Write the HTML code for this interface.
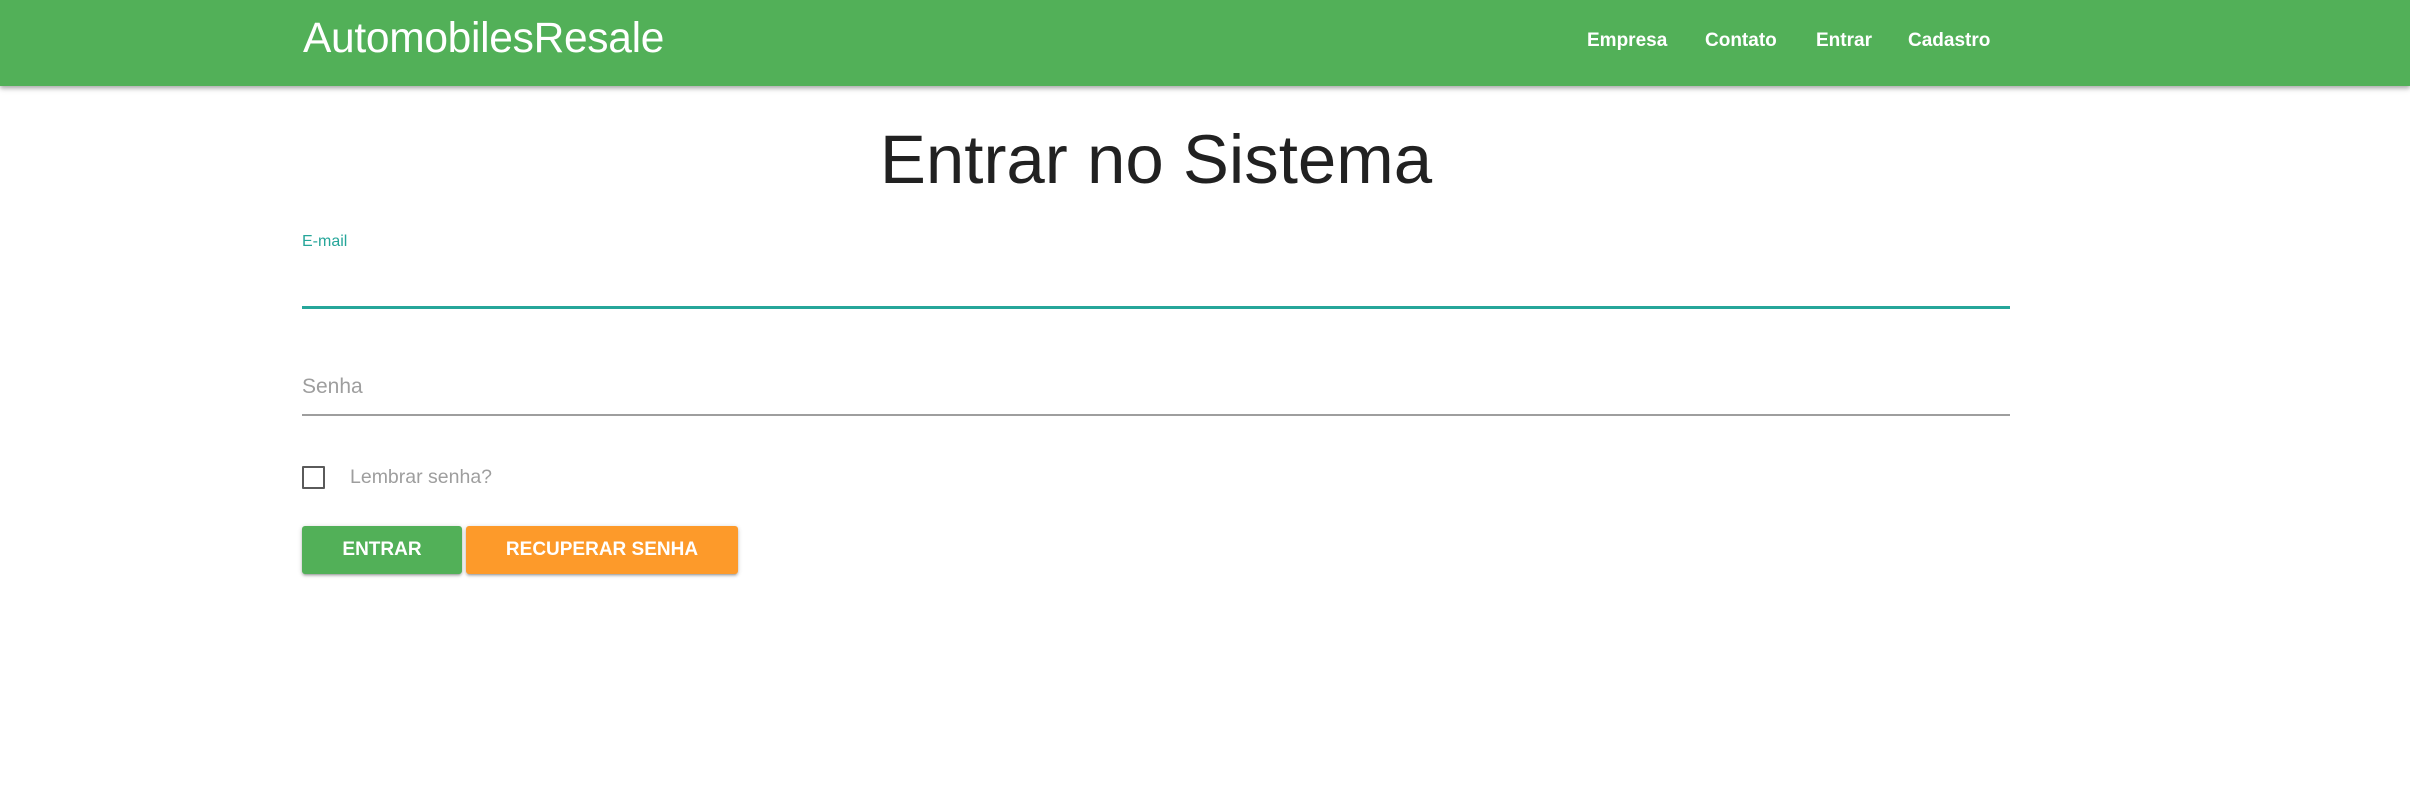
<!DOCTYPE html>
<html><head><meta charset="utf-8"><style>
html,body{margin:0;padding:0;width:2410px;height:804px;overflow:hidden;background:#fff;font-family:"Liberation Sans",Arial,sans-serif;}
.hdr{position:absolute;left:0;top:0;width:2410px;height:86px;background:#52b058;box-shadow:0 2px 4px rgba(0,0,0,0.25),0 3px 6px rgba(0,0,0,0.12);}
.t{position:absolute;white-space:nowrap;line-height:1;}
.logo{left:303px;top:18px;font-size:42.5px;color:#fff;letter-spacing:-0.3px;}
.nav{top:31px;font-size:19px;font-weight:bold;color:#fff;}
.title{left:0;width:2312px;text-align:center;top:125px;font-size:69px;color:#212121;}
.lbl{left:302px;top:234px;font-size:16px;color:#26a69a;}
.ln1{position:absolute;left:302px;top:306px;width:1708px;height:3px;background:#26a69a;}
.ph{left:302px;top:376px;font-size:21px;color:#9e9e9e;}
.ln2{position:absolute;left:302px;top:414px;width:1708px;height:2px;background:#9e9e9e;}
.cb{position:absolute;left:302px;top:466px;width:19px;height:19px;border:2px solid #5a5a5a;border-radius:1px;}
.cbl{left:350px;top:468px;font-size:19.5px;color:#9e9e9e;}
.btn{position:absolute;top:526px;height:48px;border-radius:3px;color:#fff;font-size:19px;font-weight:bold;text-align:center;line-height:48px;box-shadow:0 2px 2px rgba(0,0,0,0.14),0 3px 1px -2px rgba(0,0,0,0.12),0 1px 5px rgba(0,0,0,0.2);}
</style></head><body>
<div class="hdr"></div>
<div class="t logo">AutomobilesResale</div>
<div class="t nav" style="left:1587px">Empresa</div>
<div class="t nav" style="left:1705px">Contato</div>
<div class="t nav" style="left:1816px">Entrar</div>
<div class="t nav" style="left:1908px">Cadastro</div>
<div class="t title">Entrar no Sistema</div>
<div class="t lbl">E-mail</div>
<div class="ln1"></div>
<div class="t ph">Senha</div>
<div class="ln2"></div>
<div class="cb"></div>
<div class="t cbl">Lembrar senha?</div>
<div class="btn" style="left:302px;width:160px;background:#52b058;">ENTRAR</div>
<div class="btn" style="left:466px;width:272px;background:#fd9a2a;">RECUPERAR SENHA</div>
</body></html>
